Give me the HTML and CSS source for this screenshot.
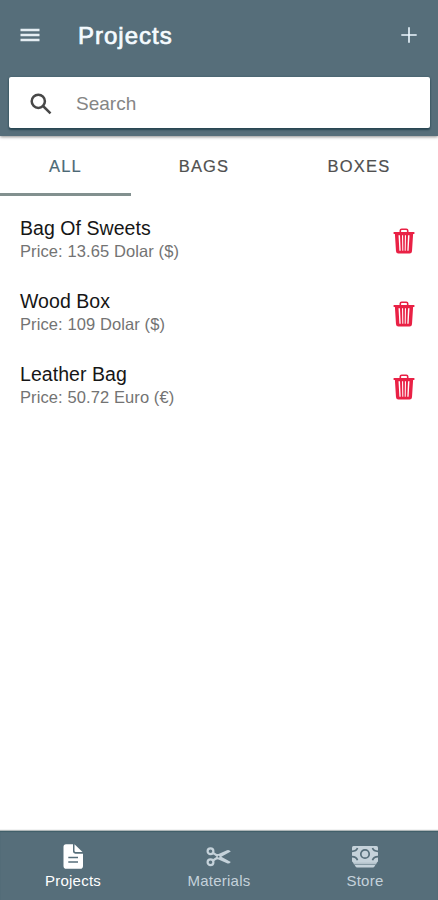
FILE: index.html
```html
<!DOCTYPE html>
<html lang="en">
<head>
<meta charset="utf-8">
<title>Projects</title>
<link rel="stylesheet" href="styles.css">
</head>
<body>
<header class="header">
  <div class="toolbar">
    <svg class="menu" viewBox="0 0 20 14"><path d="M.5 2h19M.5 7h19M.5 12h19"/></svg>
    <h1 class="title">Projects</h1>
    <svg class="add" viewBox="0 0 16 16"><path d="M8 .3v15.4M.3 8h15.4"/></svg>
  </div>
  <div class="search">
    <svg class="search-icon" viewBox="0 0 22 22"><circle cx="8.3" cy="8.3" r="6.6"/><path d="M13 13l7.5 7.3"/></svg>
    <span>Search</span>
  </div>
</header>
<nav class="segments">
  <div class="segment active">ALL</div>
  <div class="segment">BAGS</div>
  <div class="segment boxes">BOXES</div>
</nav>
<svg width="0" height="0" class="defs">
  <symbol id="trash" viewBox="0 0 22 26">
    <path d="M7.300 4.500V2.600Q7.300 1.200 8.700 1.200h4.600Q14.700 1.200 14.700 2.600v1.900" fill="none" stroke="currentColor" stroke-width="1.600"/>
    <path fill="currentColor" fill-rule="evenodd" d="M.6 3.900h20.800v2.100h-1.300L19 23.300q-.2 2.300-2.400 2.300H5.400Q3.200 25.600 3 23.300L1.900 6H.6zM5.500 7.300l.9 15.400h1.300L7 7.300zM9 7.300l.3 15.400h1L10.100 7.300zM11.900 7.300l-.2 15.400h1L13 7.300zM15 7.300l-.7 15.400h1.300l.9-15.400z"/>
  </symbol>
</svg>
<main class="list">
  <div class="item"><div class="details"><div class="name">Bag Of Sweets</div><div class="price">Price: 13.65 Dolar ($)</div></div><svg class="trash"><use href="#trash"/></svg></div>
  <div class="item"><div class="details"><div class="name">Wood Box</div><div class="price">Price: 109 Dolar ($)</div></div><svg class="trash"><use href="#trash"/></svg></div>
  <div class="item"><div class="details"><div class="name">Leather Bag</div><div class="price">Price: 50.72 Euro (€)</div></div><svg class="trash"><use href="#trash"/></svg></div>
</main>
<footer class="tabs">
  <div class="tab active">
    <svg class="tab-icon" viewBox="0 0 28 26"><path fill="currentColor" fill-rule="evenodd" d="M7 1.200h7v7.400Q14 10.700 16.300 10.700H24V22.900Q24 25.700 21.200 25.700H7.300Q4.500 25.700 4.500 22.900V3.700Q4.500 1.200 7 1.200zM9.300 13.700v1.600h9.700v-1.600zM9.300 18.200v1.600h9.700v-1.600z"/><path fill="currentColor" d="M15.500 1.300L23.500 9h-6.800q-1.200 0-1.200-1.200z"/></svg>
    <span>Projects</span>
  </div>
  <div class="tab">
    <svg class="tab-icon" viewBox="0 0 28 26"><g fill="none" stroke="currentColor" stroke-width="2.200"><circle cx="5.500" cy="8.200" r="2.900"/><circle cx="5.500" cy="19.200" r="2.900"/><path d="M7.900 9.900l5.400 3.400M7.900 17.500l5.400-3.400"/></g><path fill="currentColor" d="M9.600 11.300L13.500 11 22 7.200q2.200-.8 3.800 1.300L16.300 13.700l9.500 5.200q-1.600 2.100-3.800 1.300l-8.500-3.800-3.900-.3 2.200-2.400z"/><circle class="hole" cx="13.600" cy="13.700" r=".9"/></svg>
    <span>Materials</span>
  </div>
  <div class="tab">
    <svg class="tab-icon" viewBox="0 0 28 26"><path fill="currentColor" d="M2.500 3h23q1.500 0 1.500 1.500v13.500q0 1.400-1.500 1.400h-23Q1 19.400 1 18V4.500q0-1.500 1.500-1.500z"/><path fill="currentColor" d="M1.600 18.500h24.800L25 21.600H3z" opacity=".85"/><path fill="currentColor" d="M3.700 22h20.600l-1 1.800q-.4.700-1.300.7H6q-.9 0-1.300-.7z"/><g class="note-lines"><circle cx="14" cy="11" r="4.200"/><path d="M1 8.300q4.300 0 5.500-3.300M27 8.300q-4.300 0-5.500-3.300M1 13.700q4.300 0 5.500 3.500M27 13.700q-4.300 0-5.500 3.500"/></g></svg>
    <span>Store</span>
  </div>
</footer>
</body>
</html>
```
FILE: styles.css
```css
* { box-sizing: border-box; }
body {
  margin: 0;
  height: 900px;
  display: flex;
  flex-direction: column;
  overflow: hidden;
  background: #fff;
  font-family: "Liberation Sans", Arial, sans-serif;
}
svg { display: block; flex: none; }
.defs { position: absolute; }
.header {
  height: 136px;
  flex: none;
  background: #566e7a;
  box-shadow: 0 1px 3px rgba(0, 0, 0, .45);
}
.toolbar {
  height: 77px;
  padding: 0 21px 7px 20px;
  display: flex;
  align-items: center;
  color: #f5fbff;
}
.menu { width: 20px; height: 14px; fill: none; stroke: #e4edf2; stroke-width: 2.4; }
.title {
  margin: 2px auto 0 38px;
  font-size: 24px;
  font-weight: 400;
  line-height: 30px;
  letter-spacing: 1px;
  -webkit-text-stroke: .7px currentColor;
}
.add { width: 16px; height: 16px; fill: none; stroke: #edf8ff; stroke-width: 1.6; }
.search {
  height: 51px;
  margin: 0 8px 0 9px;
  padding: 2px 21px 0;
  display: flex;
  align-items: center;
  gap: 24px;
  background: #fff;
  border-radius: 2px;
  box-shadow: 0 2px 2px #284652, 0 0 2px #365561;
  color: #858585;
  font-size: 19px;
}
.search span { padding-top: 1px; }
.search-icon { width: 22px; height: 22px; fill: none; stroke: #484848; stroke-width: 2.5; }
.segments {
  height: 60px;
  flex: none;
  display: grid;
  grid-template-columns: 131px 146px 1fr;
}
.segment {
  display: flex;
  align-items: center;
  justify-content: center;
  border-bottom: 3px solid transparent;
  padding-top: 3px;
  color: #505050;
  font-size: 16.5px;
  letter-spacing: 1.2px;
  -webkit-text-stroke: .2px currentColor;
}
.segment.active { color: #4b6975; border-color: #82908f; }
.segment.boxes { padding-left: 3px; }
.list { flex: 1; padding-top: 8px; }
.item {
  height: 73px;
  padding: 0 23px 0 20px;
  display: flex;
  align-items: center;
  justify-content: space-between;
}
.details { padding-bottom: 4px; }
.name { color: #161616; font-size: 19.5px; line-height: 24px; letter-spacing: .05px; }
.price { color: #737373; font-size: 16.5px; line-height: 22px; letter-spacing: .1px; }
.trash { width: 22px; height: 26px; color: #e92145; }
.tabs {
  height: 69px;
  flex: none;
  display: grid;
  grid-template-columns: repeat(3, 1fr);
  background: #566e7a;
  box-shadow: 0 -1px 1px #b1b8b9, inset 0 1px 1px #415f69;
}
.tab {
  display: flex;
  flex-direction: column;
  align-items: center;
  padding-top: 12px;
  color: #c5d2da;
  font-size: 15px;
  line-height: 18px;
  letter-spacing: .25px;
  gap: 3px;
}
.tab.active { color: #fff; }
.tab-icon { width: 28px; height: 26px; }
.hole { fill: #566e7a; }
.note-lines { fill: none; stroke: #566e7a; stroke-width: 1.7; }
```
